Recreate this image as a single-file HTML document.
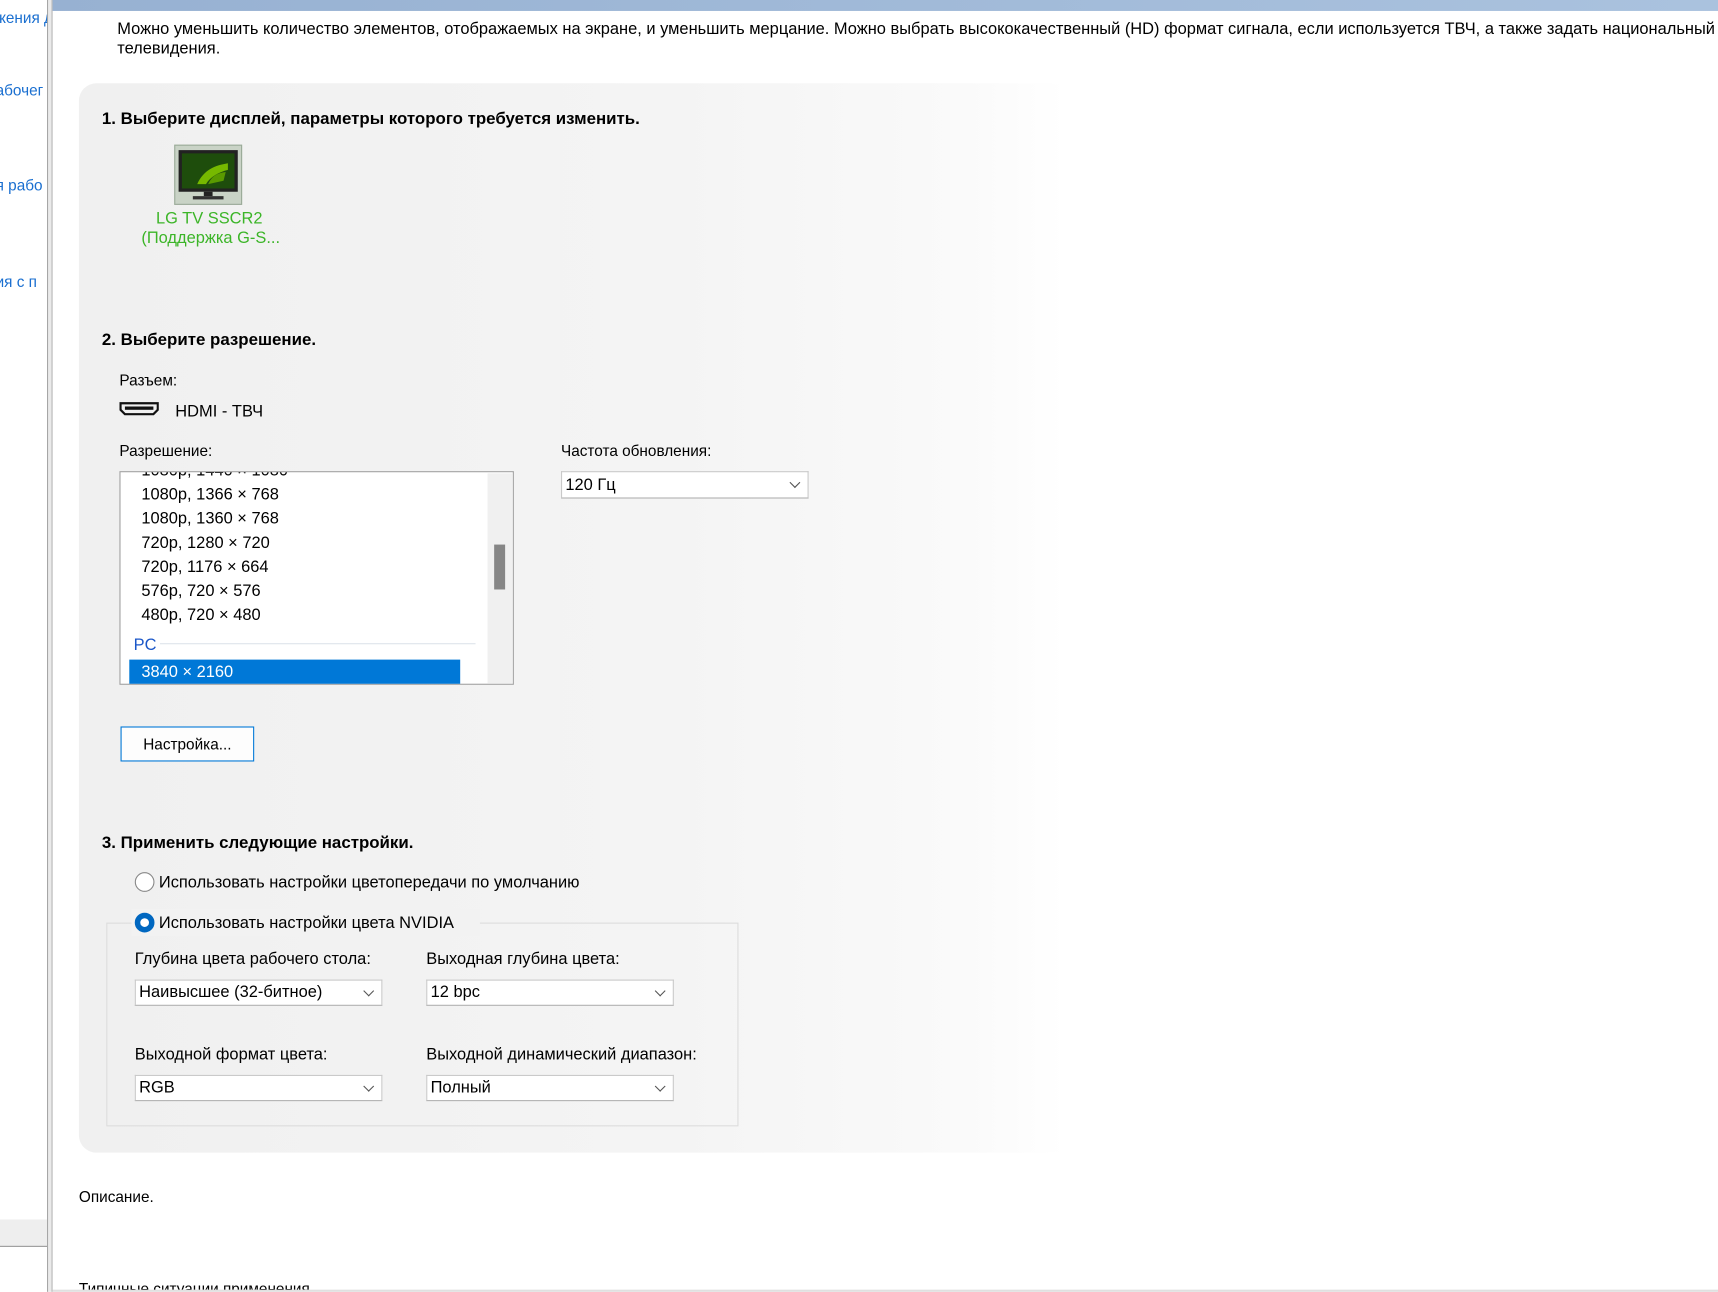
<!DOCTYPE html>
<html><head><meta charset="utf-8"><style>
html,body{margin:0;padding:0;background:#fff;overflow:hidden;width:1718px;height:1292px}
#w{position:absolute;left:0;top:0;width:1568px;height:1179px;transform:scale(1.0957);transform-origin:0 0;font-family:"Liberation Sans","DejaVu Sans",sans-serif;font-size:14px;color:#000}
.a{position:absolute;white-space:nowrap}
.lnk{color:#1a6fd0;font-size:14px}
.h{font-weight:bold;font-size:15.4px}
.sel{position:absolute;background:#fff;border:1px solid #c9c9c9;border-bottom-color:#b0b0b0;height:22px;box-sizing:border-box;font-size:15px;line-height:22px;padding-left:3px}
.sel:after{content:"";position:absolute;right:8px;top:6px;width:6px;height:6px;border-right:1px solid #555;border-bottom:1px solid #555;transform:rotate(45deg)}
.li{position:absolute;left:19px;font-size:15px}
</style></head><body><div id="w">
<div class="a" style="left:0;top:0;width:43px;height:1179px;background:#fff;overflow:hidden">
<div class="a lnk" style="left:-4px;top:8px">жения д</div>
<div class="a lnk" style="left:-4px;top:74px">абочег</div>
<div class="a lnk" style="left:-4px;top:161px">я рабо</div>
<div class="a lnk" style="left:-4px;top:249px">ия с п</div>
<div class="a" style="left:0;top:1113px;width:43px;height:24px;background:#eee;border-bottom:1px solid #999"></div>
</div>
<div class="a" style="left:43px;top:0;width:1px;height:1179px;background:#9a9a9a"></div>
<div class="a" style="left:44px;top:0;width:3px;height:1179px;background:#eaeaea"></div>
<div class="a" style="left:47px;top:0;width:1px;height:1179px;background:#b5b5b5"></div>
<div class="a" style="left:48px;top:0;width:1520px;height:10px;background:linear-gradient(90deg,#97b1d2,#aac2de)"></div>
<div class="a" style="left:48px;top:1177px;width:1520px;height:2px;background:#e0e0e0"></div>
<div class="a" style="left:107px;top:18px;font-size:15px">Можно уменьшить количество элементов, отображаемых на экране, и уменьшить мерцание. Можно выбрать высококачественный (HD) формат сигнала, если используется ТВЧ, а также задать национальный</div>
<div class="a" style="left:107px;top:36px;font-size:15px">телевидения.</div>
<div class="a" style="left:72px;top:76px;width:900px;height:976px;border-radius:16px 0 0 16px;background:linear-gradient(90deg,#f0f0f0 0%,#f4f4f4 60%,#fafafa 90%,#fff 100%)"></div>
<div class="a h" style="left:93px;top:100px">1. Выберите дисплей, параметры которого требуется изменить.</div>
<div class="a" style="left:159px;top:132px;width:62px;height:55px;background:#c9d3c6;border:1px solid #9aaa98;box-sizing:border-box">
<svg width="60" height="53" viewBox="0 0 60 53"><rect x="3" y="4" width="54" height="38" fill="#222"/><rect x="6" y="7" width="48" height="32" fill="#1e4d0c"/><path d="M20 35 C26 22 36 18 48 16 L48 22 C40 24 32 28 28 35Z" fill="#76b900"/><path d="M30 35 C33 28 38 25 46 24 L44 32 Z" fill="#5a9a00"/><rect x="26" y="42" width="8" height="4" fill="#222"/><rect x="16" y="46" width="28" height="3" fill="#333"/></svg></div>
<div class="a" style="left:129px;top:191px;width:124px;text-align:center;color:#3cb528;font-size:15px;line-height:18px">LG TV SSCR2<br>(Поддержка G-S...</div>
<div class="a h" style="left:93px;top:302px">2. Выберите разрешение.</div>
<div class="a" style="left:109px;top:339px;font-size:14px">Разъем:</div>
<svg class="a" style="left:109px;top:366px" width="36" height="14" viewBox="0 0 36 14"><path d="M1 2 H35 V8 L31 12 H5 L1 8Z" fill="none" stroke="#111" stroke-width="2"/><rect x="5" y="5" width="26" height="3" fill="#111"/></svg>
<div class="a" style="left:160px;top:367px;font-size:15px">HDMI - ТВЧ</div>
<div class="a" style="left:109px;top:403px;font-size:14px">Разрешение:</div>
<div class="a" style="left:109px;top:430px;width:360px;height:195px;box-sizing:border-box;border:1px solid #a0a0a0;background:#fff;overflow:hidden">
<div class="li" style="top:-10px">1080p, 1440 × 1080</div>
<div class="li" style="top:12px">1080p, 1366 × 768</div>
<div class="li" style="top:34px">1080p, 1360 × 768</div>
<div class="li" style="top:56px">720p, 1280 × 720</div>
<div class="li" style="top:78px">720p, 1176 × 664</div>
<div class="li" style="top:100px">576p, 720 × 576</div>
<div class="li" style="top:122px">480p, 720 × 480</div>
<div class="a" style="left:12px;top:149px;color:#1a56c8;font-size:15px">PC</div>
<div class="a" style="left:36px;top:156px;width:288px;height:1px;background:#dde3ea"></div>
<div class="a" style="left:8px;top:171px;width:302px;height:23px;background:#0078d7;color:#fff;font-size:15px;line-height:23px;padding-left:11px;box-sizing:border-box">3840 × 2160</div>
<div class="a" style="left:335px;top:1px;width:23px;height:192px;background:#f0f0f0"></div>
<div class="a" style="left:341px;top:66px;width:10px;height:41px;background:#868686"></div>
</div>
<div class="a" style="left:110px;top:663px;width:122px;height:32px;box-sizing:border-box;border:1px solid #0078d7;background:#fdfdfd;text-align:center;line-height:30px;font-size:14px">Настройка...</div>
<div class="a" style="left:512px;top:403px;font-size:14px">Частота обновления:</div>
<div class="sel" style="left:512px;top:430px;width:226px;height:25px;line-height:24px">120 Гц</div>
<div class="a h" style="left:93px;top:761px">3. Применить следующие настройки.</div>
<div class="a" style="left:123px;top:796px;width:18px;height:18px;border:1px solid #888;border-radius:50%;box-sizing:border-box;background:#fff"></div>
<div class="a" style="left:145px;top:797px;font-size:15px">Использовать настройки цветопередачи по умолчанию</div>
<div class="a" style="left:97px;top:842px;width:577px;height:186px;box-sizing:border-box;border:1px solid #dcdcdc"></div>
<div class="a" style="left:120px;top:830px;width:318px;height:24px;background:#f2f2f2"></div>
<div class="a" style="left:123px;top:833px;width:18px;height:18px;border:5px solid #0067c0;border-radius:50%;box-sizing:border-box;background:#fff"></div>
<div class="a" style="left:145px;top:834px;font-size:15px">Использовать настройки цвета NVIDIA</div>
<div class="a" style="left:123px;top:867px;font-size:15px">Глубина цвета рабочего стола:</div>
<div class="a" style="left:389px;top:867px;font-size:15px">Выходная глубина цвета:</div>
<div class="sel" style="left:123px;top:894px;width:226px;height:24px">Наивысшее (32-битное)</div>
<div class="sel" style="left:389px;top:894px;width:226px;height:24px">12 bpc</div>
<div class="a" style="left:123px;top:954px;font-size:15px">Выходной формат цвета:</div>
<div class="a" style="left:389px;top:954px;font-size:15px">Выходной динамический диапазон:</div>
<div class="sel" style="left:123px;top:981px;width:226px;height:24px">RGB</div>
<div class="sel" style="left:389px;top:981px;width:226px;height:24px">Полный</div>
<div class="a" style="left:72px;top:1084px;font-size:14px">Описание.</div>
<div class="a" style="left:72px;top:1168px;font-size:14px;height:9px;overflow:hidden">Типичные ситуации применения.</div>
</div></body></html>
